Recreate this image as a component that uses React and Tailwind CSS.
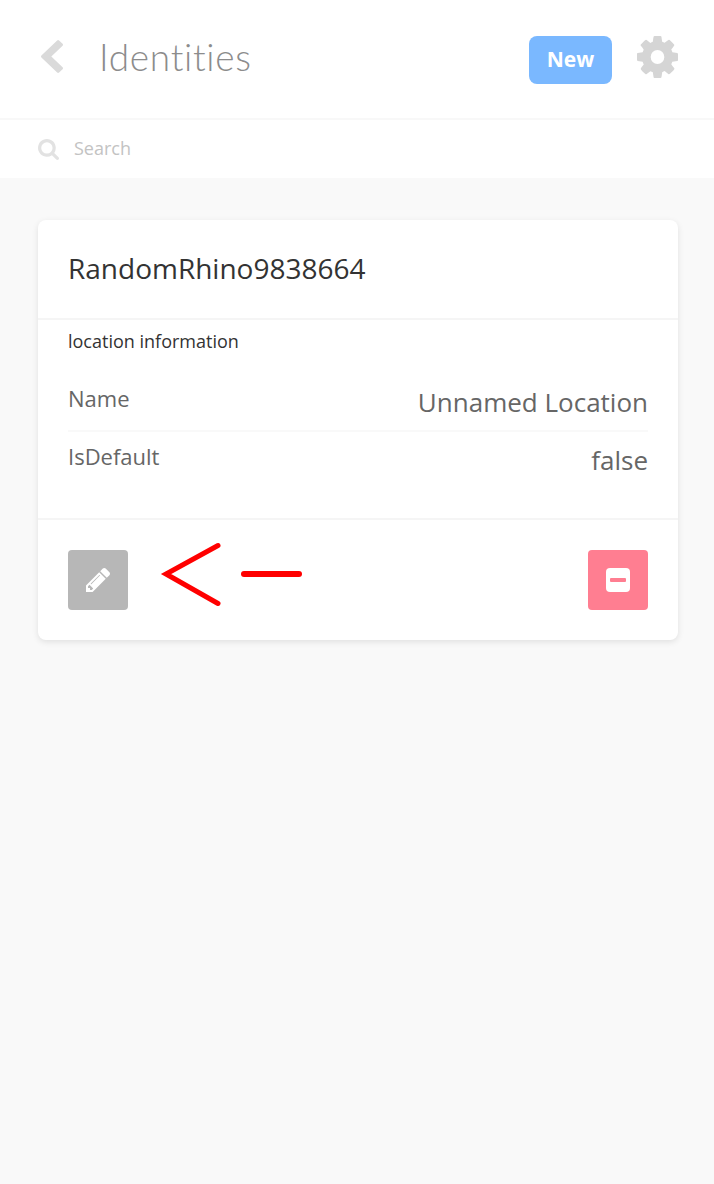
function Icon({ box, className, d }) {
  return (
    <svg viewBox={box} className={className} fill="currentColor" preserveAspectRatio="none" aria-hidden="true">
      <path d={d} />
    </svg>
  );
}

const CHEVRON = "M1171 301l-531 531 531 531q19 19 19 45t-19 45l-166 166q-19 19-45 19t-45-19l-742-742q-19-19-19-45t19-45l742-742q19-19 45-19t45 19l166 166q19 19 19 45t-19 45z";
const SEARCH = "M1152 832q0-185-131.5-316.5t-316.5-131.5-316.5 131.5-131.5 316.5 131.5 316.5 316.5 131.5 316.5-131.5 131.5-316.5zm512 832q0 52-38 90t-90 38q-54 0-90-38l-343-342q-179 124-399 124-143 0-273.5-55.5t-225-150-150-225-55.5-273.5 55.5-273.5 150-225 225-150 273.5-55.5 273.5 55.5 225 150 150 225 55.5 273.5q0 220-124 399l343 343q37 37 37 90z";
const COG = "M1024 896q0-106-75-181t-181-75-181 75-75 181 75 181 181 75 181-75 75-181zm512-109v222q0 12-8 23t-20 13l-185 28q-19 54-39 91 35 50 107 138 10 12 10 25t-9 23q-27 37-99 108t-94 71q-12 0-26-9l-138-108q-44 23-91 38-16 136-29 186-7 28-36 28h-222q-14 0-24.5-8.5t-11.5-21.5l-28-184q-49-16-90-37l-141 107q-10 9-25 9-14 0-25-11-126-114-165-168-7-10-7-23 0-12 8-23 15-21 51-66.5t54-70.5q-27-50-41-99l-183-27q-13-2-21-12.5t-8-23.5v-222q0-12 8-23t19-13l186-28q14-46 39-92-40-57-107-138-10-12-10-24 0-10 9-23 26-36 98.5-107.5t94.5-71.5q13 0 26 10l138 107q44-23 91-38 16-136 29-186 7-28 36-28h222q14 0 24.5 8.5t11.5 21.5l28 184q49 16 90 37l142-107q9-9 24-9 13 0 25 10 129 119 165 170 7 8 7 22 0 12-8 23-15 21-51 66.5t-54 70.5q26 50 41 98l183 28q13 2 21 12.5t8 23.5z";
const PENCIL = "M363 1536l91-91-235-235-91 91v107h128v128h107zm523-928q0-22-22-22-10 0-17 7l-542 542q-7 7-7 17 0 22 22 22 10 0 17-7l542-542q7-7 7-17zm-54-192l416 416-832 832h-416v-416zm683 96q0 53-37 90l-166 166-416-416 166-165q36-38 90-38 53 0 91 38l235 234q37 39 37 91z";

export default function App() {
  return (
    <div className="min-h-[1184px] w-full bg-[#f9f9f9] font-['Open_Sans',sans-serif] text-[#333]">
      <header className="flex h-[120px] items-start border-b-2 border-[#f8f8f8] bg-white pr-9 pl-[41px]">
        <button className="mt-[40px] text-[#dadada]" aria-label="Back">
          <Icon box="154 26 1036 1612" className="block h-[33px] w-[22px]" d={CHEVRON} />
        </button>
        <h1 className="mt-[33px] ml-[36px] font-['Lato',sans-serif] text-[37px] leading-[48px] font-light tracking-[0.7px] text-[#8c8c8c]">
          Identities
        </h1>
        <button className="mt-9 ml-auto h-12 w-[83px] rounded-lg bg-[#7ab8ff] pb-[2px] text-[21px] leading-[46px] font-bold text-white">
          New
        </button>
        <button className="mt-9 ml-[25px] text-[#d5d5d5]" aria-label="Settings">
          <Icon box="0 128 1536 1536" className="block h-[42px] w-[41px]" d={COG} />
        </button>
      </header>

      <div className="flex h-[58px] items-center bg-white pb-[2px] pl-[38px]">
        <Icon box="0 128 1664 1664" className="mt-[2px] h-[21px] w-[21px] text-[#e2e2e2]" d={SEARCH} />
        <span className="ml-[15px] text-[18px] leading-6 text-[#c3c3c3]">Search</span>
      </div>

      <main className="pt-[42px] pr-9 pl-[38px]">
        <section className="h-[420px] rounded-lg bg-white shadow-[0_2px_6px_rgba(0,0,0,0.1)]">
          <h2 className="h-[100px] border-b-2 border-[#f5f5f5] px-[30px] pt-[28px] text-[28px] leading-10">
            RandomRhino9838664
          </h2>
          <div className="h-[200px] border-b-2 border-[#f5f5f5] px-[30px] pt-[9px]">
            <h3 className="text-[18px] leading-6">location information</h3>
            <dl className="mt-[21px] text-[#666]">
              <div className="flex h-[58px] justify-between border-b-2 border-[#f9f9f9]">
                <dt className="pt-[9px] text-[22px] leading-[30px]">Name</dt>
                <dd className="pt-[10px] text-[26px] leading-9">Unnamed Location</dd>
              </div>
              <div className="flex h-[58px] justify-between">
                <dt className="pt-[9px] text-[22px] leading-[30px]">IsDefault</dt>
                <dd className="pt-[10px] text-[26px] leading-9">false</dd>
              </div>
            </dl>
          </div>
          <div className="flex h-[120px] items-start px-[30px] pt-[22px]">
            <button className="mt-2 flex size-[60px] items-center justify-center rounded-[4px] bg-[#b7b7b7] text-white" aria-label="Edit">
              <Icon box="0 149 1515 1515" className="size-6" d={PENCIL} />
            </button>
            <svg className="ml-8 h-[66px] w-[144px]" viewBox="160 542 144 66" fill="none" stroke="#f00" strokeLinecap="round" aria-hidden="true">
              <path d="M218 545.5L166 574l52 29.5" strokeWidth="5" strokeMiterlimit="10" />
              <path d="M244 574h55" strokeWidth="6" />
            </svg>
            <button className="mt-2 ml-auto flex size-[60px] items-center justify-center rounded-[4px] bg-[#ff7e91]" aria-label="Remove">
              <span className="flex size-6 items-center justify-center rounded-[4px] bg-white">
                <span className="h-1 w-4 rounded-[1px] bg-[#ff7e91]" />
              </span>
            </button>
          </div>
        </section>
      </main>
    </div>
  );
}
